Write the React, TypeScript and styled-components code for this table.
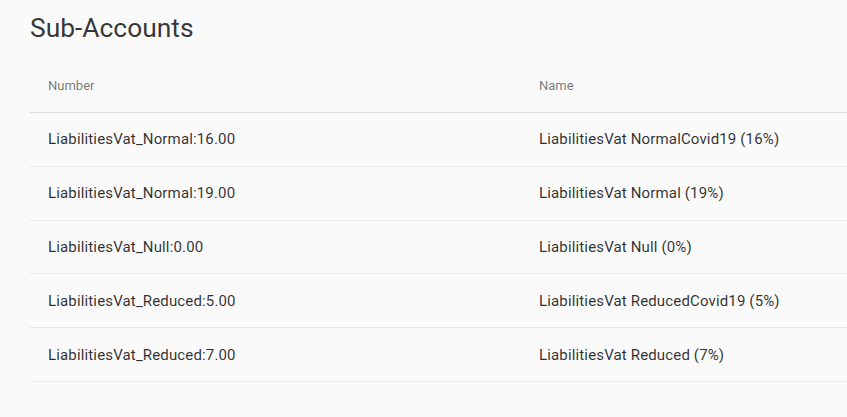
import styled, { createGlobalStyle } from "styled-components";

const GlobalStyle = createGlobalStyle`
  html, body {
    margin: 0;
    padding: 0;
    background: #fafafa;
    overflow: hidden;
  }
  body {
    font-family: Roboto, "Liberation Sans", Arial, sans-serif;
    color: rgba(0, 0, 0, 0.87);
  }
`;

const Page = styled.div`
  padding: 12px 0 0 30px;
`;

const Title = styled.h2`
  margin: 0 0 12px;
  font-size: 26.4px;
  font-weight: 400;
  line-height: 32px;
  color: rgba(0, 0, 0, 0.8);
`;

const Table = styled.table`
  width: 982px;
  border-collapse: collapse;
  table-layout: fixed;
`;

const HeadCell = styled.th`
  height: 53px;
  padding: 3px 18px 0;
  text-align: left;
  font-size: 13px;
  font-weight: 400;
  color: rgba(0, 0, 0, 0.54);
  border-bottom: 1px solid #dedede;
`;

const Cell = styled.td`
  height: 52.8px;
  padding: 0 18px;
  font-size: 15px;
  letter-spacing: 0.15px;
  color: rgba(0, 0, 0, 0.82);
  border-bottom: 1px solid #e8e8e8;
`;

const rows = [
  ["LiabilitiesVat_Normal:16.00", "LiabilitiesVat NormalCovid19 (16%)"],
  ["LiabilitiesVat_Normal:19.00", "LiabilitiesVat Normal (19%)"],
  ["LiabilitiesVat_Null:0.00", "LiabilitiesVat Null (0%)"],
  ["LiabilitiesVat_Reduced:5.00", "LiabilitiesVat ReducedCovid19 (5%)"],
  ["LiabilitiesVat_Reduced:7.00", "LiabilitiesVat Reduced (7%)"],
];

export default function App() {
  return (
    <Page>
      <GlobalStyle />
      <Title>Sub-Accounts</Title>
      <Table>
        <thead>
          <tr>
            <HeadCell>Number</HeadCell>
            <HeadCell>Name</HeadCell>
          </tr>
        </thead>
        <tbody>
          {rows.map(([num, name]) => (
            <tr key={num}>
              <Cell>{num}</Cell>
              <Cell>{name}</Cell>
            </tr>
          ))}
        </tbody>
      </Table>
    </Page>
  );
}
